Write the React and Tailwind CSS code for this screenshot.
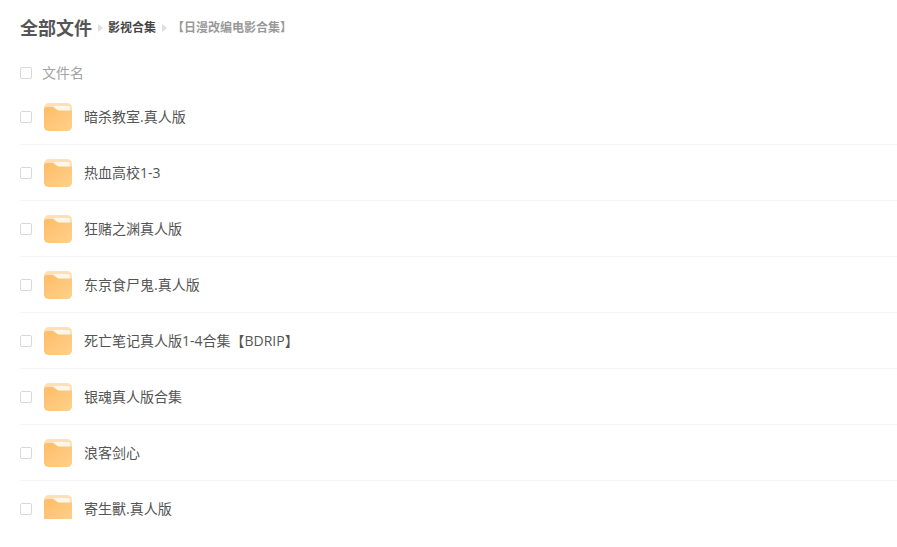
import React from 'react';

const files = [
  '暗杀教室.真人版',
  '热血高校1-3',
  '狂赌之渊真人版',
  '东京食尸鬼.真人版',
  '死亡笔记真人版1-4合集【BDRIP】',
  '银魂真人版合集',
  '浪客剑心',
  '寄生獸.真人版',
];

const FolderIcon = () => (
  <svg width="28" height="28" viewBox="0 0 28 28" className="block shrink-0">
    <defs>
      <linearGradient id="folderBody" x1="0" y1="0" x2="1" y2="1">
        <stop offset="0" stopColor="#ffbc6a" />
        <stop offset="1" stopColor="#ffd18a" />
      </linearGradient>
    </defs>
    <rect x="0" y="0" width="28" height="28" rx="5" fill="#ffe0b4" />
    <path d="M9 3 H24 Q26 3 26 5 V8 H13 Z" fill="#fff7ec" />
    <path d="M0 7 Q0 4 3 4 H8.5 Q10.5 4 12 6 Q13.5 7.5 15 7.5 H28 V23 Q28 28 23 28 H5 Q0 28 0 23 Z" fill="url(#folderBody)" />
  </svg>
);

const Checkbox = () => (
  <span className="block w-3 h-3 shrink-0 rounded-[2px] border border-[#d9d9d9] bg-white" />
);

const Arrow = () => (
  <span className="block w-0 h-0 border-y-[4px] border-y-transparent border-l-[5px] border-l-[#dedede]" />
);

export default function App() {
  return (
    <div
      className="w-[897px] h-[547px] bg-white pl-5 overflow-hidden"
      style={{ fontFamily: '"Open Sans", "Noto Sans CJK SC", sans-serif' }}
    >
      {/* Breadcrumb */}
      <div className="flex items-center h-[56px]">
        <span className="text-[18px] font-bold text-[#555] leading-none">全部文件</span>
        <span className="ml-[6px]"><Arrow /></span>
        <span className="ml-[5px] text-[12px] font-bold text-[#444] leading-none">影视合集</span>
        <span className="ml-[6px]"><Arrow /></span>
        <span className="ml-[5px] text-[12px] font-bold text-[#999] leading-none">【日漫改编电影合集】</span>
      </div>

      {/* Table head */}
      <div className="flex items-center h-[33px]">
        <Checkbox />
        <span className="ml-[10px] text-[14px] text-[#a3a3a3] leading-none">文件名</span>
      </div>

      {/* File rows */}
      <div className="h-[430px] overflow-hidden">
        {files.map((name) => (
          <div key={name} className="flex items-center h-[56px] border-b border-[#f5f5f5]">
            <Checkbox />
            <span className="ml-3"><FolderIcon /></span>
            <span className="ml-3 text-[14px] text-[#555] leading-none">{name}</span>
          </div>
        ))}
      </div>
    </div>
  );
}
